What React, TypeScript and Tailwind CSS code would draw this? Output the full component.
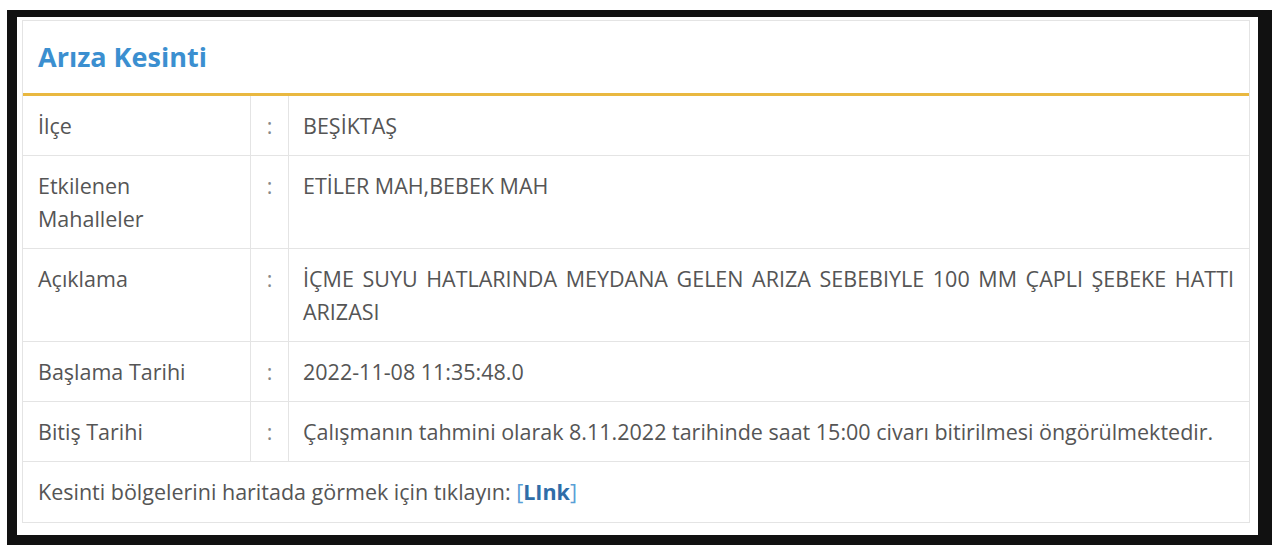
const rows: { label: string[]; value: string; justify?: boolean }[] = [
  { label: ["İlçe"], value: "BEŞİKTAŞ" },
  { label: ["Etkilenen", "Mahalleler"], value: "ETİLER MAH,BEBEK MAH" },
  {
    label: ["Açıklama"],
    value: "İÇME SUYU HATLARINDA MEYDANA GELEN ARIZA SEBEBIYLE 100 MM ÇAPLI ŞEBEKE HATTI ARIZASI",
    justify: true,
  },
  { label: ["Başlama Tarihi"], value: "2022-11-08 11:35:48.0" },
  {
    label: ["Bitiş Tarihi"],
    value: "Çalışmanın tahmini olarak 8.11.2022 tarihinde saat 15:00 civarı bitirilmesi öngörülmektedir.",
  },
]

export default function App() {
  return (
    <div className="h-[557px] w-[1280px] bg-white pl-[7px] pt-[10px] font-['Open_Sans',sans-serif]">
      <div className="h-[535px] w-[1265px] border-b-[10px] border-l-[10px] border-r-[14px] border-t-[7px] border-[#111] bg-white pb-[12px] pl-[5px] pr-[8px] pt-[3px]">
        <div className="flex h-full flex-col border border-[#e4e4e4] bg-white">
          <div className="flex h-[72px] items-center pl-[15px]">
            <h2 className="text-[27px] font-bold text-[#3b8fd0]">Arıza Kesinti</h2>
          </div>
          <div className="h-[3px] bg-[#e9b840]" />
          {rows.map((row) => (
            <div key={row.value} className="flex border-b border-[#e4e4e4] text-[21.5px] leading-[33px] text-[#555]">
              <div className="w-[228px] shrink-0 border-r border-[#e4e4e4] py-[13px] pl-[15px]">
                {row.label.map((l) => (
                  <div key={l}>{l}</div>
                ))}
              </div>
              <div className="w-[38px] shrink-0 border-r border-[#e4e4e4] py-[13px] text-center text-[#888]">:</div>
              <div className={`flex-1 py-[13px] pl-[14px] pr-[15px] ${row.justify ? "text-justify" : ""}`}>{row.value}</div>
            </div>
          ))}
          <div className="flex flex-1 items-center pl-[15px] text-[21.5px] text-[#555]">
            Kesinti bölgelerini haritada görmek için tıklayın:&nbsp;
            <span className="text-[#5a9fd6]">[</span>
            <span className="font-bold text-[#2f6da8]">LInk</span>
            <span className="text-[#5a9fd6]">]</span>
          </div>
        </div>
      </div>
    </div>
  )
}
